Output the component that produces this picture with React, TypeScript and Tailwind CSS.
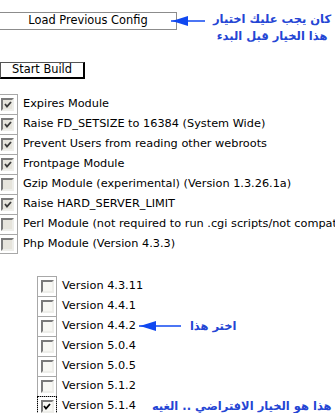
import React from 'react';

type Opt = { label: string; checked?: boolean };

const modules: Opt[] = [
    { label: 'Expires Module', checked: true },
    { label: 'Raise FD_SETSIZE to 16384 (System Wide)', checked: true },
    { label: 'Prevent Users from reading other webroots', checked: true },
    { label: 'Frontpage Module', checked: true },
    { label: 'Gzip Module (experimental) (Version 1.3.26.1a)' },
    { label: 'Raise HARD_SERVER_LIMIT', checked: true },
    { label: 'Perl Module (not required to run .cgi scripts/not compatible with mod_php)' },
    { label: 'Php Module (Version 4.3.3)' },
];

const versions = ['4.3.11', '4.4.1', '4.4.2', '5.0.4', '5.0.5', '5.1.2', '5.1.4'];

function Check({ checked, dim }: { checked?: boolean; dim?: boolean }) {
    return (
        <div
            className={`w-[13px] h-[13px] shrink-0 border-2 border-t-[#7a7a7a] border-l-[#7a7a7a] border-r-[#eeeeea] border-b-[#eeeeea] flex items-center justify-center ${
                dim ? 'bg-[#e6e4dc]' : 'bg-[#f7f7f3]'
            }`}
        >
            {checked && (
                <svg width="8" height="7" viewBox="0 0 8 7">
                    <polyline points="1,3 3,5.5 7,1" fill="none" stroke={dim ? '#3a3a3a' : '#000'} strokeWidth="1.8" />
                </svg>
            )}
        </div>
    );
}

function Arrow({ w }: { w: number }) {
    return (
        <svg width={w} height="12" viewBox={`0 0 ${w} 12`} className="shrink-0">
            <line x1="0" y1="6" x2={w} y2="6" stroke="#1048f0" strokeWidth="1.4" />
            <polygon points="1,6 17,1 17,11" fill="#1048f0" />
        </svg>
    );
}

function Note({ children, className = '' }: { children: React.ReactNode; className?: string }) {
    return (
        <div dir="rtl" className={`font-['DejaVu_Sans',sans-serif] font-bold text-[11.5px] leading-[17px] text-[#2445d4] whitespace-nowrap ${className}`}>
            {children}
        </div>
    );
}

export default function App() {
    return (
        <div className="w-[335px] h-[413px] overflow-hidden bg-white text-black font-['DejaVu_Sans',sans-serif] text-[11.3px]">
            {/* top buttons */}
            <div className="flex items-start pt-[11px]">
                <button className="-ml-px mt-px shrink-0 w-[178px] h-[18px] border border-[#8c8c8c] bg-white text-[11.4px] leading-none">
                    Load Previous Config
                </button>
                <div className="-ml-[6px] mt-[4px]">
                    <Arrow w={34} />
                </div>
                <Note className="ml-[8px] text-center">
                    <div>كان يجب عليك اختيار</div>
                    <div>هذا الخيار قبل البدء</div>
                </Note>
            </div>

            <button className="mt-[17px] w-[85px] h-[17px] border-t border-l border-[#555] border-r-2 border-b-2 border-r-black border-b-black bg-white text-[11.4px] leading-none">
                Start Build
            </button>

            {/* modules */}
            <div className="mt-[15px] -ml-[3px] w-[338px] overflow-hidden">
                {modules.map((m, i) => (
                    <div key={m.label} className="flex items-center h-[20px]">
                        <div
                            className={`w-[21px] h-[20px] shrink-0 border-x border-t border-[#a8a8a8] flex items-center justify-center ${
                                i === modules.length - 1 ? 'border-b' : ''
                            }`}
                        >
                            <Check checked={m.checked} dim />
                        </div>
                        <span className="pl-[5px] whitespace-nowrap">{m.label}</span>
                    </div>
                ))}
            </div>

            {/* php versions */}
            <div className="mt-[22px] pl-[37px]">
                {versions.map((v, i) => {
                    const last = i === versions.length - 1;
                    return (
                        <div key={v} className="flex items-center h-[20px]">
                            <div
                                className={`w-[20px] h-[20px] shrink-0 border-x border-t border-[#a8a8a8] flex items-center justify-center ${
                                    last ? 'outline outline-1 outline-dotted outline-black -outline-offset-1' : ''
                                }`}
                            >
                                <Check checked={last} />
                            </div>
                            <span className="pl-[5px] whitespace-nowrap">Version {v}</span>
                            {v === '4.4.2' && (
                                <>
                                    <div className="ml-[3px]">
                                        <Arrow w={42} />
                                    </div>
                                    <Note className="ml-[9px]">اختر هذا</Note>
                                </>
                            )}
                            {last && <Note className="ml-[16px]">هذا هو الخيار الافتراضي .. الغيه</Note>}
                        </div>
                    );
                })}
            </div>
        </div>
    );
}
